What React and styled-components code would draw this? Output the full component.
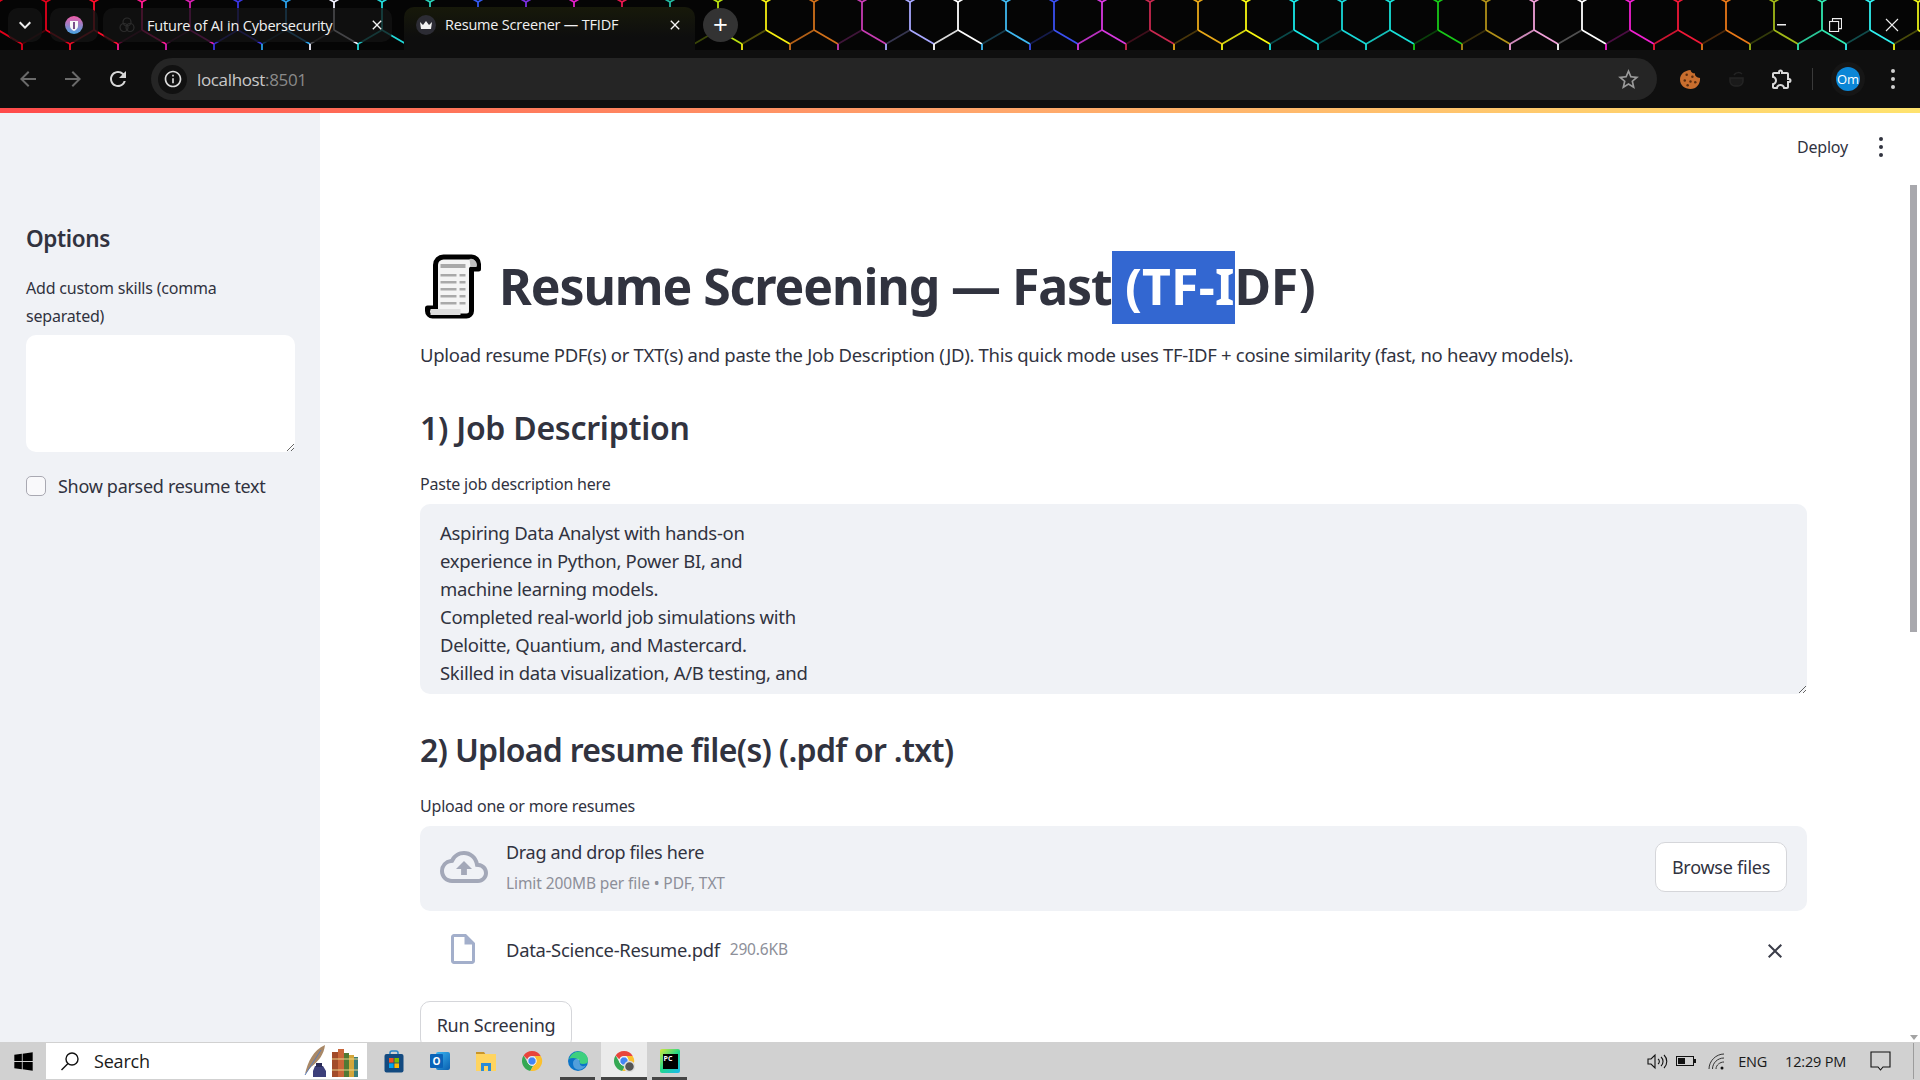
import React from "react";
import styled, { createGlobalStyle } from "styled-components";
import { MdOutlineCloudUpload, MdOutlineInsertDriveFile, MdClose, MdOutlineExtension, MdStarBorder, MdKeyboardArrowDown, MdArrowBack, MdArrowForward, MdRefresh, MdInfoOutline } from "react-icons/md";
import { FaWindows } from "react-icons/fa";

const sans = `"Noto Sans", "Open Sans", sans-serif`;
const chromeFont = `"Open Sans", "Noto Sans", sans-serif`;

const GlobalStyle = createGlobalStyle`
  html, body { margin: 0; padding: 0; height: 100%; overflow: hidden; background: #fff; }
  * { box-sizing: border-box; }
  #root { height: 100%; }
`;

const Shell = styled.div`
  width: 1920px;
  height: 1080px;
  display: flex;
  flex-direction: column;
  overflow: hidden;
  font-family: ${sans};
  color: #31333f;
`;

/* ---------- browser tabs ---------- */
const TabStrip = styled.div`
  position: relative;
  height: 50px;
  flex: none;
  background: #050505;
  display: flex;
  align-items: flex-start;
  padding: 8px 0 0 8px;
  overflow: hidden;
`;

const HexLayer = styled.svg`
  position: absolute;
  left: 0;
  top: 0;
`;

const TabRow = styled.div`
  position: relative;
  display: flex;
  align-items: flex-start;
  flex: 1;
`;

const RoundChip = styled.div`
  width: ${(p) => p.$w}px;
  height: 34px;
  margin-right: ${(p) => p.$mr || 0}px;
  border-radius: 10px;
  background: rgba(20, 20, 20, 0.82);
  display: flex;
  align-items: center;
  justify-content: center;
  color: #eee;
  flex: none;
`;

const Tab = styled.div`
  width: ${(p) => p.$w}px;
  height: ${(p) => (p.$active ? 43 : 34)}px;
  margin-top: ${(p) => (p.$active ? -1 : 0)}px;
  margin-right: ${(p) => p.$mr}px;
  flex: none;
  display: flex;
  align-items: center;
  padding: ${(p) => (p.$active ? "0 0 8px 12px" : "0 0 0 16px")};
  border-radius: 10px 10px ${(p) => (p.$active ? "0 0" : "10px 10px")};
  background: ${(p) => (p.$active ? "linear-gradient(#17190a, #0e0e0e 70%)" : "rgba(18, 18, 18, 0.78)")};
  color: #f1f1f1;
  font: 400 14.5px ${chromeFont};
  letter-spacing: -0.2px;
  white-space: nowrap;
`;

const TabTitle = styled.span`
  flex: 1;
  margin-left: ${(p) => p.$ml}px;
`;

const TabClose = styled(MdClose)`
  font-size: 16px;
  color: #f4f4f4;
  margin-right: ${(p) => p.$mr}px;
`;

const NewTab = styled.div`
  width: 35px;
  height: 34px;
  border-radius: 50%;
  background: #333;
  color: #fff;
  font: 400 26px/32px ${chromeFont};
  text-align: center;
  flex: none;
`;

const WindowButtons = styled.div`
  margin-left: auto;
  margin-right: 21px;
  margin-top: 9px;
  height: 15px;
  display: flex;
  align-items: center;
  gap: 43px;
`;

/* ---------- toolbar ---------- */
const Toolbar = styled.div`
  height: 58px;
  flex: none;
  background: #0f0f0f;
  display: flex;
  align-items: center;
  padding: 0 0 0 16px;
  color: #ddd;
`;

const NavIcon = styled.span`
  width: ${(p) => p.$w || 24}px;
  font-size: 24px;
  line-height: 0;
  color: ${(p) => (p.$dim ? "#6a6a6a" : "#d8d8d8")};
  margin-right: ${(p) => p.$mr || 0}px;
  margin-left: ${(p) => p.$ml || 0}px;
  flex: none;
`;

const Omnibox = styled.div`
  width: 1506px;
  height: 42px;
  margin-left: 21px;
  flex: none;
  border-radius: 21px;
  background: #252525;
  display: flex;
  align-items: center;
  padding: 0 16px 0 7px;
`;

const SiteInfo = styled.span`
  width: 29px;
  height: 29px;
  border-radius: 50%;
  background: #111;
  color: #ddd;
  font-size: 20px;
  display: flex;
  align-items: center;
  justify-content: center;
`;

const Url = styled.div`
  margin-left: 10px;
  flex: 1;
  font: 400 17px ${chromeFont};
  letter-spacing: -0.35px;
  color: #c9c9c9;
  span { color: #8a8a8a; }
`;

const StarIcon = styled(MdStarBorder)`
  font-size: 25px;
  color: #9a9a9a;
`;

const ToolIcons = styled.div`
  display: flex;
  align-items: center;
  margin-left: 23px;
`;

const Divider = styled.span`
  width: 1px;
  height: 22px;
  background: #3a3a3a;
  margin: 0 23px 0 18px;
`;

const Avatar = styled.span`
  width: 24px;
  height: 24px;
  border-radius: 50%;
  background: #0b86d6;
  color: #fff;
  font: 400 13px/24px ${chromeFont};
  text-align: center;
  box-shadow: 0 0 0 5px #161616;
`;

const AccentBar = styled.div`
  height: 5px;
  flex: none;
  background: linear-gradient(90deg, #ff4b4b, #ffa46b 50%, #ffe36e);
`;

/* ---------- streamlit page ---------- */
const Page = styled.div`
  position: relative;
  flex: 1;
  min-height: 0;
  display: flex;
  overflow: hidden;
  background: #fff;
`;

const Sidebar = styled.aside`
  width: 320px;
  flex: none;
  background: #f0f2f6;
  padding: 108px 25px 0 26px;
`;

const SideTitle = styled.h2`
  margin: 0;
  font-size: 22.5px;
  line-height: 36px;
  font-weight: 600;
  letter-spacing: -0.4px;
`;

const Label = styled.label`
  display: block;
  font-size: 16px;
  line-height: 28px;
  letter-spacing: -0.2px;
  margin-top: ${(p) => p.$mt || 0}px;
`;

const Area = styled.textarea`
  display: block;
  width: 100%;
  height: ${(p) => p.$h}px;
  margin-top: ${(p) => p.$mt}px;
  border: none;
  outline: none;
  border-radius: 10px;
  background: ${(p) => p.$bg};
  padding: 15px 20px 0;
  font: 400 18.5px/28px ${sans};
  letter-spacing: -0.3px;
  color: #31333f;
  overflow: hidden;
  resize: vertical;
`;

const CheckRow = styled.div`
  display: flex;
  align-items: center;
  margin-top: 20px;
  font-size: 18px;
  letter-spacing: -0.3px;
  line-height: 28px;
`;

const Box = styled.span`
  width: 20px;
  height: 20px;
  border: 1px solid #a9a9b2;
  border-radius: 5px;
  background: #f9f9fb;
  margin-right: 12px;
  flex: none;
`;

const Main = styled.main`
  flex: 1;
  min-width: 0;
`;

const TopBar = styled.div`
  height: 68px;
  display: flex;
  align-items: center;
  justify-content: flex-end;
  padding-right: 37px;
  font-size: 16px;
  letter-spacing: -0.2px;
  gap: 31px;
`;

const Content = styled.div`
  padding: 0 113px 0 100px;
`;

const Title = styled.h1`
  margin: 70px 0 0;
  height: 73px;
  display: flex;
  align-items: center;
  font-size: 50px;
  font-weight: 700;
  letter-spacing: -1.1px;
  white-space: pre;
  padding-left: 5px;
`;

const TitleText = styled.span`
  margin-left: 17px;
  line-height: 71px;
`;

const EmojiSlot = styled.span`
  display: flex;
  margin-bottom: 3px;
`;

const Picked = styled.span`
  display: inline-block;
  line-height: 71px;
  padding-bottom: 2px;
  background: #3367d1;
  color: #fff;
  letter-spacing: 0.2px;
`;

const Tail = styled.span`
  letter-spacing: -0.4px;
`;

const Lead = styled.p`
  margin: 17px 0 0;
  font-size: 18.5px;
  line-height: 28px;
  letter-spacing: -0.3px;
`;

const Section = styled.h2`
  margin: ${(p) => p.$mt}px 0 0;
  font-size: 32px;
  line-height: 44px;
  font-weight: 600;
  letter-spacing: ${(p) => p.$ls}px;
`;

const Drop = styled.div`
  margin-top: 6px;
  height: 85px;
  border-radius: 10px;
  background: #f0f2f6;
  display: flex;
  align-items: center;
  padding: 0 20px 3px 20px;
`;

const CloudIcon = styled(MdOutlineCloudUpload)`
  font-size: 48px;
  color: #a3a8b8;
  flex: none;
`;

const DropText = styled.div`
  margin-left: 18px;
  flex: 1;
`;

const Primary = styled.div`
  font-size: 18px;
  line-height: 30px;
  letter-spacing: -0.3px;
`;

const Hint = styled.div`
  margin-top: 1px;
  font-size: 15.5px;
  line-height: 30px;
  letter-spacing: -0.1px;
  color: #8d8f99;
`;

const Btn = styled.button`
  height: ${(p) => p.$h}px;
  width: ${(p) => p.$w}px;
  margin-top: ${(p) => p.$mt || 0}px;
  border: 1px solid #d5d6da;
  border-radius: 10px;
  background: #fff;
  color: #31333f;
  font: 400 18px ${sans};
  letter-spacing: -0.25px;
  padding: 0;
  display: block;
`;

const FileRow = styled.div`
  margin-top: 20px;
  height: 36px;
  display: flex;
  align-items: center;
  padding: 0 20px 0 26px;
`;

const FileIcon = styled(MdOutlineInsertDriveFile)`
  font-size: 36px;
  color: #a3afcb;
  margin-left: -1px;
  flex: none;
`;

const FileName = styled.span`
  margin-left: 25px;
  font-size: 18.4px;
  letter-spacing: -0.3px;
`;

const FileSize = styled.span`
  margin-left: 10px;
  flex: 1;
  font-size: 15.5px;
  letter-spacing: -0.15px;
  color: #8d8f99;
`;

const RemoveIcon = styled(MdClose)`
  font-size: 24px;
  color: #3b3d49;
  margin-top: 4px;
`;

const ScrollThumb = styled.div`
  position: absolute;
  right: 3px;
  top: 72px;
  width: 7px;
  height: 447px;
  background: #a8a8ad;
`;

const ScrollArrow = styled.div`
  position: absolute;
  right: 2px;
  bottom: 2px;
  border: 4.5px solid transparent;
  border-top: 5px solid #a3a3a3;
  border-bottom: 0;
`;

/* ---------- windows taskbar ---------- */
const Taskbar = styled.div`
  height: 38px;
  flex: none;
  background: #d1d1d1;
  display: flex;
  align-items: center;
  color: #1a1a1a;
`;

const StartBtn = styled.div`
  width: 46px;
  font-size: 21px;
  display: flex;
  justify-content: center;
  color: #000;
  flex: none;
`;

const SearchBox = styled.div`
  width: 321px;
  height: 36px;
  background: #fff;
  display: flex;
  align-items: center;
  padding: 0 7px 0 14px;
  flex: none;
  font: 400 18px ${chromeFont};
  letter-spacing: -0.2px;
`;

const SearchLabel = styled.span`
  flex: 1;
  margin-left: 14px;
`;

const Apps = styled.div`
  display: flex;
  margin-left: 4px;
`;

const AppSlot = styled.div`
  position: relative;
  width: 46px;
  height: 38px;
  display: flex;
  align-items: center;
  justify-content: center;
  background: ${(p) => (p.$hot ? "#ebebeb" : "transparent")};

  &::after {
    content: "";
    display: ${(p) => (p.$open ? "block" : "none")};
    position: absolute;
    left: ${(p) => (p.$hot ? 0 : 5)}px;
    right: ${(p) => (p.$hot ? 0 : 6)}px;
    bottom: 0;
    height: 3px;
    background: #444;
  }
`;

const Tray = styled.div`
  margin-left: auto;
  display: flex;
  align-items: center;
  padding-right: 6px;
  font: 400 14.5px ${chromeFont};
  letter-spacing: -0.2px;
`;

const TrayItem = styled.span`
  margin-right: ${(p) => p.$mr}px;
  display: flex;
  align-items: center;
`;

const EndLine = styled.span`
  width: 1px;
  height: 36px;
  background: #9c9c9c;
`;

/* ---------- drawings ---------- */
const HEX = ["#e3001b", "#e3001b", "#ff0d2a", "#ff1a8f", "#d81fb0", "#3a35e0", "#2a9fe8", "#f2f2ff", "#22d8d8", "#29d0b8", "#3358ee", "#7a2fe0", "#e01fc8", "#e8184f", "#22b8a0", "#b8e010", "#f5ee10", "#d0701a", "#c83cb4", "#a8a8ff", "#ffffff", "#3fb8f0", "#3a50f0", "#d838e0", "#c8284f", "#e8a818", "#f8f810", "#18e8e8", "#18d8d8", "#18e0d8", "#18c818", "#b09018", "#f0a0d8", "#ffffff", "#f020d0", "#f01838", "#e87818", "#a0b818", "#30e8b0", "#30f0f0", "#e8f018"];
const DIM = (i) => (i % 3 === 1 ? 0.85 : 0.3);

const Hexagons = () => (
  <HexLayer width="1920" height="50" fill="none" strokeWidth="1.8">
    {HEX.map((c, i) => {
      const x = -2 + i * 48;
      const next = HEX[i + 1] || c;
      return (
        <g key={i}>
          <path d={`M${x} 2V30`} stroke={c} />
          <path d={`M${x} 30L${x + 24} 44`} stroke={c} />
          <path d={`M${x + 24} 44L${x + 48} 30`} stroke={next} opacity={DIM(i)} />
          <path d={`M${x + 24} 44V52`} stroke={next} />
          <path d={`M${x - 24} -12L${x} 2L${x + 24} -12`} stroke={c} />
        </g>
      );
    })}
  </HexLayer>
);

const ScrollEmoji = () => (
  <svg width="57" height="66" viewBox="0 0 56 66">
    <path d="M10 58V12a8 8 0 0 1 8-8h28a7 7 0 0 1 7 7v5h-7v42a5 5 0 0 1-5 5H7a5 5 0 0 1-5-5v-3h8z" fill="#f4f4f4" stroke="#000" strokeWidth="5" strokeLinejoin="round" />
    <path d="M44 6a6 6 0 0 1 7 8h-6z" fill="#bdbdbd" />
    <rect x="15" y="11" width="25" height="4" fill="#a9a9a9" />
    {[21, 28, 35, 42, 49].map((y) => (
      <g key={y} fill="#a9a9a9">
        <rect x="15" y={y} width="16" height="2.5" />
        <rect x="34" y={y} width="6" height="2.5" />
      </g>
    ))}
    <rect x="5" y="56" width="30" height="6" fill="#dedede" />
  </svg>
);

const Kebab = ({ color, size = 4, gap = 3 }) => (
  <svg width={size} height={size * 3 + gap * 2} fill={color}>
    {[0, 1, 2].map((i) => (
      <circle key={i} cx={size / 2} cy={size / 2 + i * (size + gap)} r={size / 2} />
    ))}
  </svg>
);

const ChromeLogo = ({ badge }) => (
  <svg width="22" height="22" viewBox="0 0 22 22">
    <path d="M11 1a10 10 0 0 1 8.7 5H11a5 5 0 0 0-4.7 3.3L2.6 5.6A10 10 0 0 1 11 1z" fill="#e8453c" />
    <path d="M2.6 5.6l4.4 7.6A5 5 0 0 0 12 16l-2.7 4.9A10 10 0 0 1 2.6 5.6z" fill="#34a853" />
    <path d="M19.7 6A10 10 0 0 1 9.3 20.9L14 13a5 5 0 0 0-.6-7z" fill="#fbc02d" />
    <circle cx="11" cy="11" r="4.2" fill="#4285f4" stroke="#fff" strokeWidth="1" />
    {badge && <circle cx="16.5" cy="16.5" r="5" fill="#555" stroke="#ddd" strokeWidth="1.5" />}
  </svg>
);

const EdgeLogo = () => (
  <svg width="22" height="22" viewBox="0 0 22 22">
    <circle cx="11" cy="11" r="10" fill="#0c74c8" />
    <path d="M2 9C4 3 10 0 15 2c4 1.500 6 5 6 9 0 2-2 3-5 3-3 0-4-1-3-3-2-3-8-4-11-2z" fill="#3ed07e" />
    <path d="M6 13c0-3 3-5 6-4 1 3 0 6 3 7 2 .5 3 0 4-1-2 4-7 6-10 4-2-1-3-3-3-6z" fill="#d8f0ff" opacity=".35" />
  </svg>
);

const StoreLogo = () => (
  <svg width="20" height="23" viewBox="0 0 20 23">
    <path d="M6 5V3a2 2 0 0 1 2-2h4a2 2 0 0 1 2 2v2" fill="none" stroke="#2a86c8" strokeWidth="1.500" />
    <rect x="0.500" y="4" width="19" height="18.500" rx="2" fill="#134a80" />
    <rect x="5" y="8" width="4.600" height="4.600" fill="#f25022" />
    <rect x="10.400" y="8" width="4.600" height="4.600" fill="#7fba00" />
    <rect x="5" y="13.400" width="4.600" height="4.600" fill="#00a4ef" />
    <rect x="10.400" y="13.400" width="4.600" height="4.600" fill="#ffb900" />
  </svg>
);

const OutlookBadge = styled.span`
  position: relative;
  width: 20px;
  height: 22px;
  display: flex;
  align-items: center;
`;

const OutlookBack = styled.span`
  position: absolute;
  left: 6px;
  top: 2px;
  width: 14px;
  height: 18px;
  border-radius: 2px;
  background: linear-gradient(135deg, #39b6f2, #0a5fb0);
`;

const OutlookFront = styled.span`
  position: relative;
  width: 13px;
  height: 14px;
  background: #0a63b8;
  color: #fff;
  border-radius: 1px;
  font: 700 10px/14px ${chromeFont};
  text-align: center;
`;

const OutlookLogo = () => (
  <OutlookBadge>
    <OutlookBack />
    <OutlookFront>O</OutlookFront>
  </OutlookBadge>
);

const FolderLogo = () => (
  <svg width="20" height="22" viewBox="0 0 20 22">
    <path d="M0 2h8l2 3H0z" fill="#c9952a" />
    <rect y="4" width="20" height="17" fill="#ffd460" />
    <path d="M5 21V13h10v8h-3v-5H8v5z" fill="#2a8cd8" />
  </svg>
);

const PyChipBack = styled.span`
  position: relative;
  width: 20px;
  height: 24px;
  background: linear-gradient(135deg, #d4e83a, #21d789 50%, #19b8f0);
  border-radius: 2px;
  display: flex;
  align-items: center;
  justify-content: center;
`;

const PyChip = styled.span`
  width: 15px;
  height: 15px;
  background: #000;
  color: #fff;
  font: 700 7px/9px ${chromeFont};
  padding-left: 1px;
  display: block;
`;

const PyCharmLogo = () => (
  <PyChipBack>
    <PyChip>PC</PyChip>
  </PyChipBack>
);

const Quill = () => (
  <svg width="58" height="34" viewBox="0 0 56 34">
    <path d="M2 30C5 18 10 6 22 1c-1 9-6 16-14 22z" fill="#a98866" />
    <path d="M2 31L18 6" stroke="#5a7bb8" strokeWidth="1" />
    <path d="M12 22h8l3 5v6H10v-6z" fill="#3c3f7a" />
    <rect x="13" y="19" width="6" height="4" fill="#2a2b58" />
    <rect x="29" y="8" width="6" height="25" fill="#a24b2a" />
    <rect x="35" y="5" width="6" height="28" fill="#c9663a" />
    <rect x="41" y="9" width="5" height="24" fill="#4f7a35" />
    <rect x="46" y="11" width="5" height="22" fill="#d4a63a" />
    <rect x="51" y="13" width="4" height="20" fill="#3a7d78" />
    <path d="M29 15h26M29 26h26" stroke="#e8d48a" strokeWidth="1" />
  </svg>
);

const SearchGlass = () => (
  <svg width="20" height="20" viewBox="0 0 20 20" fill="none" stroke="#111" strokeWidth="1.400">
    <circle cx="12" cy="8" r="6" />
    <path d="M8 12.500L1.500 19" />
  </svg>
);

const Speaker = () => (
  <svg width="21" height="17" viewBox="0 0 21 17" fill="none" stroke="#111" strokeWidth="1.100">
    <path d="M1 6h3l4-4v13l-4-4H1z" />
    <path d="M11 6a3 3 0 0 1 0 5M14 4a6 6 0 0 1 0 9M17 2a9 9 0 0 1 0 13" />
  </svg>
);

const Battery = () => (
  <svg width="20" height="12" viewBox="0 0 20 12">
    <rect x="0.500" y="1.500" width="17" height="9" fill="none" stroke="#111" />
    <rect x="2" y="3" width="7" height="6" fill="#111" />
    <rect x="18" y="4" width="2" height="4" fill="#111" />
  </svg>
);

const Wifi = () => (
  <svg width="17" height="17" viewBox="0 0 17 17" fill="none" stroke="#333" strokeWidth="1">
    <path d="M1 16C1 8 8 1 16 1M4.500 16c0-6 5-11 11.500-11M8 16c0-4 4-7 8-7" />
    <circle cx="14" cy="15" r="1.500" fill="#111" stroke="none" />
  </svg>
);

const Balloon = () => (
  <svg width="21" height="21" viewBox="0 0 21 21" fill="none" stroke="#111" strokeWidth="1.100">
    <path d="M1 1h19v15h-7l-2.500 3L8 16H1z" />
  </svg>
);

const Cookie = () => (
  <svg width="21" height="21" viewBox="0 0 22 22">
    <path d="M11 1c.5 2.500 2 3.500 4.500 3.500 0 3 2 4.500 5.500 5 .5 6.500-4 11.500-10 11.500S0 17 0 11 5 1.500 11 1z" fill="#c96e2e" />
    {[[7, 6], [13, 8], [5, 12], [11, 13], [16, 14], [8, 17]].map(([cx, cy]) => (
      <circle key={`${cx}-${cy}`} cx={cx} cy={cy} r="1.300" fill="#5a2d10" />
    ))}
  </svg>
);

const DarkCup = () => (
  <svg width="22" height="18" viewBox="0 0 22 18" fill="none" stroke="#242424" strokeWidth="1.500">
    <path d="M4 8h13v3a5 5 0 0 1-5 5H9a5 5 0 0 1-5-5z" fill="#1a1a1a" />
    <path d="M8 5c2-3 6-3 8-1" />
  </svg>
);

const WinMin = () => <svg width="9" height="2"><rect width="9" height="1.500" fill="#eee" /></svg>;
const WinRestore = () => (
  <svg width="13" height="14" viewBox="0 0 13 14" fill="none" stroke="#eee" strokeWidth="1.100">
    <rect x="0.600" y="3.500" width="9" height="10" />
    <path d="M3.500 3.500V0.600h9v10H9.600" />
  </svg>
);
const WinClose = () => (
  <svg width="14" height="14" viewBox="0 0 14 14" stroke="#eee" strokeWidth="1.100">
    <path d="M1 1l12 12M13 1L1 13" />
  </svg>
);

const PinFavicon = () => (
  <svg width="18" height="18" viewBox="0 0 18 18">
    <defs>
      <linearGradient id="pinFill" x1="0" y1="0" x2="0" y2="1">
        <stop offset="0" stopColor="#f05ca8" />
        <stop offset="1" stopColor="#46a6e4" />
      </linearGradient>
    </defs>
    <circle cx="9" cy="9" r="9" fill="url(#pinFill)" />
    <path d="M5 5h8v5c0 2.500-2 4-4 5-2-1-4-2.500-4-5z" fill="#f8f8f8" />
    <path d="M8 6h2v7H8z" fill="#7a4f8a" />
  </svg>
);

const KnotFavicon = () => (
  <svg width="16" height="16" viewBox="0 0 16 16" fill="none" stroke="#2c2c2c" strokeWidth="1.200">
    <circle cx="8" cy="5" r="4" />
    <circle cx="5" cy="10.500" r="4" />
    <circle cx="11" cy="10.500" r="4" />
  </svg>
);

const Crown = () => (
  <svg width="20" height="20" viewBox="0 0 20 20">
    <circle cx="10" cy="10" r="10" fill="#2c2c34" />
    <path d="M4 7l3 3 3-4 3 4 3-3-1 7H5z" fill="#f2f2f2" />
  </svg>
);

const ResumeLines = `Aspiring Data Analyst with hands-on
experience in Python, Power BI, and
machine learning models.
Completed real-world job simulations with
Deloitte, Quantium, and Mastercard.
Skilled in data visualization, A/B testing, and`;

export default function App() {
  return (
    <Shell>
      <GlobalStyle />
      <TabStrip>
        <Hexagons />
        <TabRow>
          <RoundChip $w={34} $mr={8}><MdKeyboardArrowDown size={24} /></RoundChip>
          <RoundChip $w={48} $mr={5}><PinFavicon /></RoundChip>
          <Tab $w={289} $mr={12}>
            <KnotFavicon />
            <TabTitle $ml={12}>Future of AI in Cybersecurity</TabTitle>
            <TabClose $mr={7} />
          </Tab>
          <Tab $active $w={291} $mr={8}>
            <Crown />
            <TabTitle $ml={9}>Resume Screener — TFIDF</TabTitle>
            <TabClose $mr={12} />
          </Tab>
          <NewTab>+</NewTab>
          <WindowButtons>
            <WinMin />
            <WinRestore />
            <WinClose />
          </WindowButtons>
        </TabRow>
      </TabStrip>

      <Toolbar>
        <NavIcon $dim $mr={21}><MdArrowBack /></NavIcon>
        <NavIcon $dim $mr={21}><MdArrowForward /></NavIcon>
        <NavIcon><MdRefresh /></NavIcon>
        <Omnibox>
          <SiteInfo><MdInfoOutline /></SiteInfo>
          <Url>localhost<span>:8501</span></Url>
          <StarIcon />
        </Omnibox>
        <ToolIcons>
          <Cookie />
          <NavIcon $ml={25}><DarkCup /></NavIcon>
          <NavIcon $ml={20}><MdOutlineExtension /></NavIcon>
          <Divider />
          <Avatar>Om</Avatar>
          <NavIcon $w={5} $ml={31}><Kebab color="#d0d0d0" size={4} gap={4} /></NavIcon>
        </ToolIcons>
      </Toolbar>
      <AccentBar />

      <Page>
        <Sidebar>
          <SideTitle>Options</SideTitle>
          <Label $mt={17}>Add custom skills (comma separated)</Label>
          <Area $bg="#fff" $h={117} $mt={5} readOnly aria-label="Add custom skills" />
          <CheckRow><Box />Show parsed resume text</CheckRow>
        </Sidebar>
        <Main>
          <TopBar>
            <span>Deploy</span>
            <Kebab color="#31333f" size={4} gap={4} />
          </TopBar>
          <Content>
            <Title>
              <EmojiSlot><ScrollEmoji /></EmojiSlot>
              <TitleText>Resume Screening — Fast<Picked> (TF-I</Picked><Tail>DF)</Tail></TitleText>
            </Title>
            <Lead>Upload resume PDF(s) or TXT(s) and paste the Job Description (JD). This quick mode uses TF-IDF + cosine similarity (fast, no heavy models).</Lead>
            <Section $mt={37} $ls={-0.25}>1) Job Description</Section>
            <Label $mt={20}>Paste job description here</Label>
            <Area $bg="#f0f2f6" $h={190} $mt={6} readOnly defaultValue={ResumeLines} aria-label="Paste job description here" />
            <Section $mt={34} $ls={-0.7}>2) Upload resume file(s) (.pdf or .txt)</Section>
            <Label $mt={20}>Upload one or more resumes</Label>
            <Drop>
              <CloudIcon />
              <DropText>
                <Primary>Drag and drop files here</Primary>
                <Hint>Limit 200MB per file • PDF, TXT</Hint>
              </DropText>
              <Btn $h={50} $w={132}>Browse files</Btn>
            </Drop>
            <FileRow>
              <FileIcon />
              <FileName>Data-Science-Resume.pdf</FileName>
              <FileSize>290.6KB</FileSize>
              <RemoveIcon />
            </FileRow>
            <Btn $h={48} $w={152} $mt={34}>Run Screening</Btn>
          </Content>
        </Main>
        <ScrollThumb />
        <ScrollArrow />
      </Page>

      <Taskbar>
        <StartBtn><FaWindows /></StartBtn>
        <SearchBox>
          <SearchGlass />
          <SearchLabel>Search</SearchLabel>
          <Quill />
        </SearchBox>
        <Apps>
          <AppSlot><StoreLogo /></AppSlot>
          <AppSlot><OutlookLogo /></AppSlot>
          <AppSlot><FolderLogo /></AppSlot>
          <AppSlot><ChromeLogo /></AppSlot>
          <AppSlot $open><EdgeLogo /></AppSlot>
          <AppSlot $open $hot><ChromeLogo badge /></AppSlot>
          <AppSlot $open><PyCharmLogo /></AppSlot>
        </Apps>
        <Tray>
          <TrayItem $mr={8}><Speaker /></TrayItem>
          <TrayItem $mr={12}><Battery /></TrayItem>
          <TrayItem $mr={13}><Wifi /></TrayItem>
          <TrayItem $mr={18}>ENG</TrayItem>
          <TrayItem $mr={24}>12:29 PM</TrayItem>
          <TrayItem $mr={22}><Balloon /></TrayItem>
          <EndLine />
        </Tray>
      </Taskbar>
    </Shell>
  );
}
